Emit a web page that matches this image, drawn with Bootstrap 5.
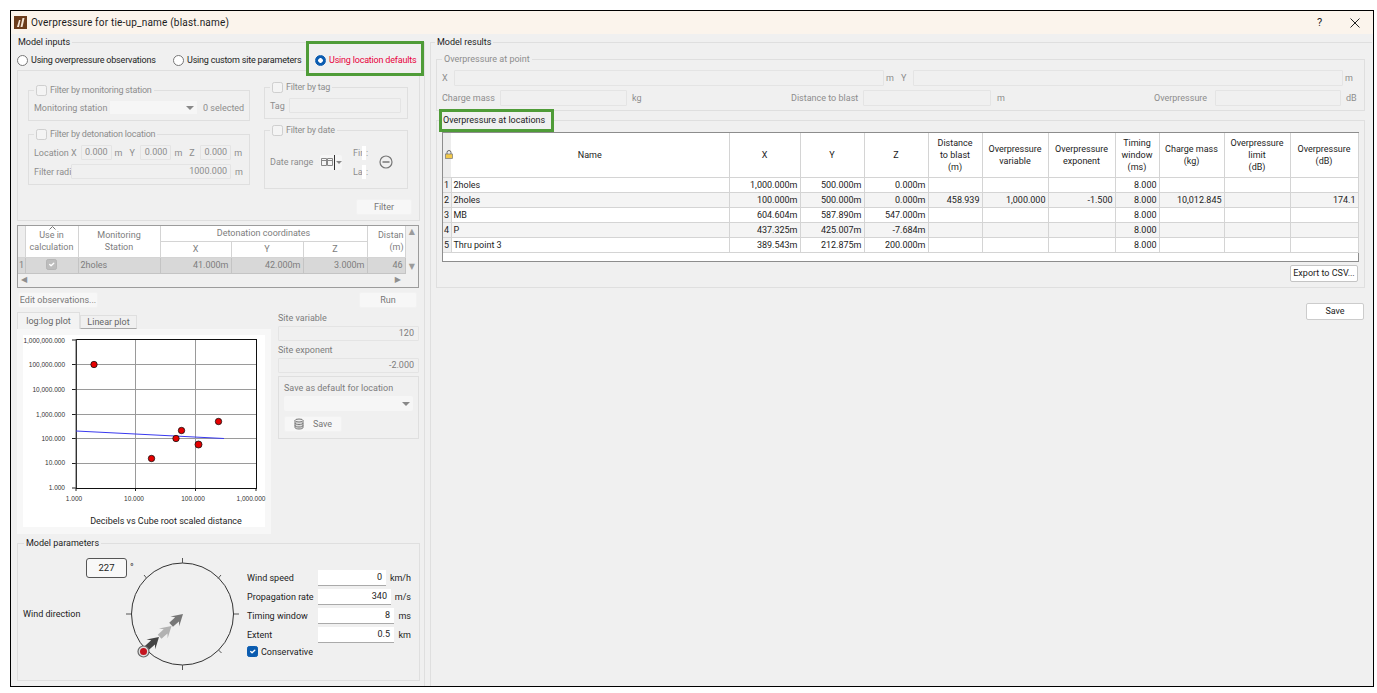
<!DOCTYPE html>
<html lang="en">
<head>
<meta charset="utf-8">
<title>Overpressure for tie-up_name (blast.name)</title>
<link rel="stylesheet" href="https://cdn.jsdelivr.net/npm/bootstrap@5.3.0/dist/css/bootstrap.min.css">
<style>
html, body { background: #fff; overflow: hidden; }
body { font-family: Roboto, "Noto Sans", sans-serif; font-size: 9px; line-height: 12px; color: #1c1c1c; white-space: nowrap; }
.win { margin: 10px 0 0 10px; width: 1364px; height: 677px; border: 1px solid #000; background: #f0f0f0; overflow: hidden; }
.tbar { height: 23px; background: #fbf4ec; font-size: 10px; padding-left: 3px; }
.tbar-title { margin-left: 4px; letter-spacing: .2px; }
.tbar-help { width: 33px; font-size: 11px; }
.tbar-close { width: 23px; }
.main { height: 652px; padding-top: 2px; }
fieldset.grp { border: 1px solid #dfdfdf; min-width: 0; margin: 0; padding: 0; }
fieldset.grp > legend { float: none; width: auto; font-size: 9px; line-height: 12px; margin: 0 0 0 6px; padding: 0 2px; }
.off, .off fieldset.grp > legend { color: #8d8d8d; }
fieldset.grp.pane-left { width: 408px; margin-left: 6px; height: 650px; border-width: 1px 1px 0 0; flex: none; }
fieldset.grp.pane-left > legend { margin-left: 0; padding-left: 1px; }
fieldset.grp.pane-right { width: 942px; margin-left: 5px; height: 650px; border-width: 1px 0 0 1px; flex: none; }
fieldset.grp.pane-right > legend { margin-left: 4px; }
.radio-row { height: 22px; width: 407px; padding-top: 2px; }
.radio-opt { flex: none; }
.radio-opt label { margin-left: 3px; letter-spacing: -.2px; }
.opt-a { width: 156px; }
.opt-b { width: 142px; }
.opt-c { width: 108px; color: #e8003c; z-index: 1; }
.hl { position: absolute; border: 3px solid #4f9c38; background: #f0f0f0; z-index: -1; }
.hl-radio { left: -9px; right: -1px; top: -13px; bottom: -10px; }
.leg-hot { z-index: 1; }
fieldset.grp > legend.leg-hot { margin-left: 4px; }
.hl-legend { left: -2px; right: -7px; top: -5px; bottom: -6px; }
.chk, .rad { width: 11px; height: 11px; margin: 0 !important; flex: none; border-color: #777; background-color: #fff; }
.chk:checked { background-color: #0b5cb0; border-color: #0b5cb0; }
.chk:disabled { opacity: 1; border-color: #cfcfcf; background-color: #f4f4f4; }
.chk:disabled:checked { background-color: #bdbdbd; border-color: #b5b5b5; }
.rad:checked { background-color: #fff; border-color: #0b5cb0; border-width: 1px; --bs-form-check-bg-image: none; background-image: radial-gradient(circle, #fff 0 2px, #0b5cb0 2.6px); }
.filters { width: 403px; height: 151px; border: 1px solid #dfdfdf; padding: 13px 10px 0 10px; }
.fil-left { width: 222px; }
.fil-right { width: 144px; margin-left: 14px; margin-top: -3px; }
fieldset.grp > legend.leg-chk { display: flex; align-items: center; gap: 3px; margin-left: 5px; letter-spacing: -.2px; }
fieldset.grp.gb-mon { height: 37px; }
fieldset.grp.gb-det { height: 57px; margin-top: 7px; }
fieldset.grp.gb-tag { height: 38px; }
fieldset.grp.gb-date { height: 65px; margin-top: 5px; }
.frow { height: 19px; padding-left: 5px; }
.gb-mon .frow { margin-top: 2px; }
.gb-det .frow:first-of-type { margin-top: 3px; }
.ctl { height: 15px; background: #f0f0f0; border: 1px solid #e4e4e4; text-align: right; padding: 0 3px; line-height: 13px; border-radius: 1px; flex: none; }
.ctl-white { background: #f6f6f6; border-color: #f0f0f0; }
.caret { width: 0; height: 0; border-left: 4px solid transparent; border-right: 4px solid transparent; border-top: 4px solid #888; }
.combo-mon { width: 89px; margin: 0 5px 0 0; }
.lab-mon { width: 75px; }
.lab-loc { width: 47px; }
.num-w { width: 31px; }
.u-a { width: 18px; padding-left: 3px; }
.u-b { width: 11px; }
.lab-rad { width: 37px; }
.num-rad { width: 160px; margin-right: 1px; }
.gb-tag .frow { margin-top: 3px; }
.lab-tag { width: 19px; }
.tag-in { width: 112px; }
.date-row { padding: 7px 0 0 5px; }
.lab-date { width: 50px; }
.date-pick { width: 22px; height: 15px; background: #f6f6f6; border-radius: 2px; padding-left: 1px; }
.date-pick i { display: block; width: 1px; height: 15px; background: #333; margin: 0 1px; }
.date-pick b { display: block; width: 0; height: 0; border-left: 3px solid transparent; border-right: 3px solid transparent; border-top: 3px solid #888; }
.fl-col { margin-left: 11px; width: 20px; }
.fl-col > div { height: 19px; }
.fl-col s { text-decoration: none; display: block; width: 4px; height: 14px; background: #fff; margin-left: -1px; }
.fl-cut { width: 10px; }
.minus-ic { margin-left: 6px; }
.btn-flat { height: 16px; background: #fff; border: 1px solid #dcdcdc; border-radius: 2px; font-size: 9px; line-height: 13px; padding: 0; color: #1c1c1c; white-space: nowrap; }
.btn-dim { background: #f7f7f7; border-color: #f2f2f2; color: #777; }
.btn-filter { width: 56px; margin: 10px -3px 0 0; }
.obs-wrap { width: 402px; height: 63px; margin-top: 4px; border: 1px solid #9c9c9c; background: #f0f0f0; }
.obs-top { height: 47px; }
.obs-tbl.table { table-layout: fixed; width: 387px; margin: 0; color: #7d7d7d; border-color: #d4d4d4; --bs-table-bg: #fff; }
.obs-tbl.table > :not(caption) > * > * { padding: 0 1px; font-size: 9px; line-height: 12px; border-width: 0 1px 1px 0; border-color: #d4d4d4; white-space: nowrap; overflow: hidden; text-align: center; vertical-align: middle; font-weight: 400; box-shadow: none; }
.obs-h1 { height: 15px; }
.obs-h2 { height: 16px; }
.obs-tbl.table > tbody > tr > * { background: #d8d8d8; height: 16px; border-color: #c4c4c4; }
.obs-tbl.table > tbody > tr > .t-l { text-align: left; padding-left: 2px; }
.obs-tbl.table > tbody > tr > .t-r { text-align: right; padding-right: 2px; }
.obs-tbl.table > thead > tr > .c-num { background: #eee; }
.obs-tbl.table > thead > tr > .t-end { text-align: right; }
.sort-up { position: absolute; top: 0; left: 23px; }
.vscroll { width: 14px; height: 47px; color: #9b9b9b; font-size: 8px; }
.hscroll { height: 14px; color: #8f8f8f; font-size: 8px; padding: 0 17px 0 3px; }
.glyph { font-family: "DejaVu Sans", sans-serif; }
.obs-btns { width: 401px; margin-top: 4px; padding: 0 1px; }
.btn-edit { width: 80px; }
.btn-run { width: 58px; }
.plot-sec { margin-top: 4px; height: 222px; width: 403px; }
.plot-col { width: 254px; }
.plot-tabs { height: 17px; }
.ptab { height: 17px; padding: 2px 0 0; text-align: center; color: #666; border: 1px solid #dfdfdf; border-bottom: 0; background: #f3f3f3; width: 63px; }
.ptab-b { width: 57px; height: 14px; padding-top: 0; margin-top: 3px; border-bottom: 1px solid #aaa; background: #f0f0f0; }
.plot-box { height: 205px; background: #f7f7f7; padding: 6px; }
.plot-svg { display: block; background: #fff; overflow: visible; }
.plot-svg text { font-family: "Liberation Sans", sans-serif; font-size: 6.5px; fill: #333; }
.plot-svg text.cap { font-family: Roboto, sans-serif; font-size: 9px; fill: #1c1c1c; }
.site-col { width: 141px; margin-left: 7px; color: #7d7d7d; }
.site-lab { height: 12px; margin-bottom: 2px; }
.site-in { height: 15px; width: 141px; padding-right: 4px; }
.site-2 { margin-top: 3px; }
.save-def { margin-top: 3px; height: 63px; width: 141px; border: 1px solid #dfdfdf; padding: 5px 5px 0; }
.save-combo { width: 129px; height: 15px; background: #f6f6f6; margin-top: 2px; padding-right: 3px; border-radius: 2px; }
.btn-save-dim { width: 58px; height: 16px; margin-top: 5px; }
fieldset.grp.params { width: 403px; height: 144px; margin-top: 3px; }
.params .cap-a { width: 109px; padding-left: 5px; }
.deg-box { width: 41px; height: 20px; margin: 9px 0 0 63px; background: #f8f8f8; border: 1px solid #555; border-radius: 3px; font-size: 9.5px; line-height: 18px; text-align: center; }
.wind-lab { margin-top: 30px; }
.dial { display: block; overflow: visible; margin-top: 4px; }
.dial text { font-family: Roboto, sans-serif; font-size: 10px; fill: #333; }
.pform { width: 164px; margin: 19px 0 0 7px; }
.prow { height: 19px; }
.plab { width: 71px; }
.pin { height: 16px; background: #fff; border-bottom: 1.5px solid #aaa; text-align: right; padding: 0 4px; line-height: 15px; }
.pin-a { width: 68px; }
.pin-b { width: 73px; }
.pin-c { width: 76px; }
.prow-chk { height: 15px; gap: 3px; }
fieldset.grp.gb-point { width: 929px; height: 58px; margin: 5px 0 0 5px; }
fieldset.grp.gb-point > legend { margin-left: 5px; }
.gb-point .r1 { height: 20px; padding-left: 5px; margin-top: 3px; }
.gb-point .r2 { height: 20px; padding-left: 5px; }
.pt-x { width: 12px; }
.pt-in1 { width: 430px; height: 16px; }
.pt-m { width: 17px; padding-left: 2px; }
.pt-c { width: 58px; }
.pt-in2 { width: 127px; height: 16px; }
.pt-kg { width: 164px; padding-left: 5px; }
.pt-d { width: 72px; }
.pt-in3 { width: 128px; height: 16px; }
.pt-mm { width: 163px; padding-left: 6px; }
.pt-o { width: 61px; }
.pt-in4 { width: 126px; height: 16px; }
.pt-db { padding-left: 5px; }
fieldset.grp.gb-loc { width: 929px; height: 174px; margin: 3px 0 0 5px; }
.res-wrap { width: 917px; height: 130px; margin: 6px 0 0 5px; border: 1px solid #8d8d8d; background: #fff; }
.res-tbl.table { table-layout: fixed; width: 915px; margin: 0; border-color: #d4d4d4; --bs-table-bg: #fff; color: #1c1c1c; }
.res-tbl.table > :not(caption) > * > * { padding: 0 2px; font-size: 9px; line-height: 12px; border-width: 0 1px 1px 0; border-color: #d4d4d4; box-shadow: none; height: 15px; white-space: nowrap; vertical-align: middle; }
.res-tbl.table > thead > tr > * { height: 44px; text-align: center; font-weight: 400; }
.res-tbl.table > tbody > tr:nth-child(even) > * { background: #f4f4f4; }
.res-tbl.table > thead > tr > .c-num { background: #ededed; padding: 0; text-align: left; overflow: visible; border-right: 0; }
.res-tbl.table > tbody > tr > .c-num { background: #f0f0f0; padding: 0 0 0 1px; }
.res-tbl.table > tbody > tr > .num { text-align: right; }
.lock-ic { display: block; margin-left: 2px; }
.btn-csv { width: 68px; height: 17px; margin: 3px 0 0 853px; font-size: 9px; border-color: #c4c4c4; display: block; }
.btn-save { width: 58px; height: 17px; display: block; margin: 15px 0 0 875px; border-color: #ccc; }
</style>
</head>
<body>
<div class="win">
  <div class="tbar d-flex align-items-center">
    <svg width="13" height="13" viewBox="0 0 13 13">
      <rect width="13" height="13" fill="#6b3c1c"/>
      <path d="M3 11 5 4 6.500 4 5 11zM6.500 11 8.500 2 10.500 2 8.500 11z" fill="#f3e4d4"/>
    </svg>
    <span class="tbar-title flex-grow-1">Overpressure for tie-up_name (blast.name)</span>
    <span class="tbar-help">?</span>
    <span class="tbar-close">
      <svg width="10" height="10" viewBox="0 0 10 10"><path d="M.5.5 9.500 9.500M9.500.5.5 9.500" stroke="#222" stroke-width="1"/></svg>
    </span>
  </div>

  <div class="main d-flex">
    <!-- model inputs -->
    <fieldset class="grp pane-left">
      <legend>Model inputs</legend>
      <div class="radio-row d-flex align-items-center">
        <div class="radio-opt opt-a d-flex align-items-center"><input class="form-check-input rad" type="radio" name="src"><label>Using overpressure observations</label></div>
        <div class="radio-opt opt-b d-flex align-items-center"><input class="form-check-input rad" type="radio" name="src"><label>Using custom site parameters</label></div>
        <div class="radio-opt opt-c position-relative d-flex align-items-center">
          <span class="hl hl-radio"></span>
          <input class="form-check-input rad" type="radio" name="src" checked><label>Using location defaults</label>
        </div>
      </div>

      <div class="filters off">
        <div class="d-flex">
          <div class="fil-left">
            <fieldset class="grp gb-mon">
              <legend class="leg-chk"><input class="form-check-input chk" type="checkbox" disabled>Filter by monitoring station</legend>
              <div class="frow d-flex align-items-center">
                <span class="lab-mon">Monitoring station</span>
                <span class="ctl ctl-white combo-mon d-flex align-items-center justify-content-end"><span class="caret"></span></span>
                <span>0 selected</span>
              </div>
            </fieldset>
            <fieldset class="grp gb-det">
              <legend class="leg-chk"><input class="form-check-input chk" type="checkbox" disabled>Filter by detonation location</legend>
              <div class="frow d-flex align-items-center">
                <span class="lab-loc">Location X</span>
                <span class="ctl num-w">0.000</span><span class="u-a">m</span>
                <span class="u-b">Y</span>
                <span class="ctl num-w">0.000</span><span class="u-a">m</span>
                <span class="u-b">Z</span>
                <span class="ctl num-w">0.000</span><span class="u-a">m</span>
              </div>
              <div class="frow d-flex align-items-center">
                <span class="lab-rad">Filter radi</span>
                <span class="ctl num-rad">1000.000</span><span class="u-a">m</span>
              </div>
            </fieldset>
          </div>
          <div class="fil-right">
            <fieldset class="grp gb-tag">
              <legend class="leg-chk"><input class="form-check-input chk" type="checkbox" disabled>Filter by tag</legend>
              <div class="frow d-flex align-items-center">
                <span class="lab-tag">Tag</span><span class="ctl tag-in"></span>
              </div>
            </fieldset>
            <fieldset class="grp gb-date">
              <legend class="leg-chk"><input class="form-check-input chk" type="checkbox" disabled>Filter by date</legend>
              <div class="date-row d-flex align-items-center">
                <span class="lab-date">Date range</span>
                <span class="date-pick d-flex align-items-center">
                  <svg width="12" height="8" viewBox="0 0 12 8"><path d="M.5.500h5v7h-5zM6.500.500h5v7h-5zM.5 2.500h11" fill="none" stroke="#888"/></svg>
                  <i></i><b></b>
                </span>
                <span class="fl-col">
                  <div class="d-flex align-items-center"><span class="fl-cut">Fir</span><s></s>:</div>
                  <div class="d-flex align-items-center"><span class="fl-cut">La</span><s></s>:</div>
                </span>
                <svg class="minus-ic" width="14" height="14" viewBox="0 0 14 14"><circle cx="7" cy="7" r="6" fill="none" stroke="#777" stroke-width="1.200"/><path d="M3.500 7h7" stroke="#777" stroke-width="1.500"/></svg>
              </div>
            </fieldset>
          </div>
        </div>
        <div class="d-flex justify-content-end">
          <button class="btn btn-flat btn-dim btn-filter" type="button">Filter</button>
        </div>
      </div>

      <div class="obs-wrap">
        <div class="obs-top d-flex">
          <table class="table obs-tbl">
            <colgroup><col style="width:7px"><col style="width:53px"><col style="width:82px"><col style="width:71px"><col style="width:72px"><col style="width:64px"><col style="width:38px"></colgroup>
            <thead>
              <tr class="obs-h1">
                <th class="c-num" rowspan="2"></th>
                <th class="position-relative" rowspan="2">
                  <svg class="sort-up" width="7" height="4" viewBox="0 0 7 4"><path d="M.5 3.500 3.500.500l3 3" fill="none" stroke="#777"/></svg>
                  Use in<br>calculation
                </th>
                <th rowspan="2">Monitoring<br>Station</th>
                <th colspan="3">Detonation coordinates</th>
                <th class="t-end" rowspan="2">Distan<br>(m)</th>
              </tr>
              <tr class="obs-h2"><th>X</th><th>Y</th><th>Z</th></tr>
            </thead>
            <tbody>
              <tr>
                <td>1</td>
                <td><input class="form-check-input chk" type="checkbox" disabled checked></td>
                <td class="t-l">2holes</td>
                <td class="t-r">41.000m</td>
                <td class="t-r">42.000m</td>
                <td class="t-r">3.000m</td>
                <td class="t-r">46</td>
              </tr>
            </tbody>
          </table>
          <div class="vscroll glyph d-flex flex-column justify-content-between align-items-center"><span>▲</span><span>▼</span></div>
        </div>
        <div class="hscroll glyph d-flex justify-content-between align-items-center"><span>◀</span><span>▶</span></div>
      </div>

      <div class="obs-btns d-flex justify-content-between">
        <button class="btn btn-flat btn-dim btn-edit" type="button">Edit observations...</button>
        <button class="btn btn-flat btn-dim btn-run" type="button">Run</button>
      </div>

      <div class="plot-sec d-flex">
        <div class="plot-col">
          <div class="plot-tabs d-flex">
            <div class="ptab">log:log plot</div>
            <div class="ptab ptab-b">Linear plot</div>
          </div>
          <div class="plot-box">
            <svg class="plot-svg" width="242" height="192" viewBox="23 334 242 192">
              <g stroke="#9a9a9a">
                <path d="M135.500 338v149M195.500 338v149M76 363.500h180M76 388.500h180M76 413.500h180M76 437.500h180M76 462.500h180"/>
              </g>
              <path d="M72 339h4M72 363.500h4M72 388.500h4M72 413.500h4M72 437.500h4M72 462.500h4M72 487h4M76 487v3M135.500 487v3M195.500 487v3M256 487v3" stroke="#222"/>
              <rect x="76.500" y="338.500" width="180" height="149" fill="none" stroke="#111"/>
              <path d="M76 338v149" stroke="#555" stroke-width="1"/>
              <path d="M76 430 224 437.500" stroke="#3a3af0" stroke-width="1"/>
              <g fill="#e60000" stroke="#111" stroke-width=".8">
                <circle cx="94" cy="363.500" r="3.200"/>
                <circle cx="151.500" cy="457.500" r="3.200"/>
                <circle cx="176" cy="437.500" r="3.200"/>
                <circle cx="181.500" cy="429.500" r="3.200"/>
                <circle cx="198.500" cy="443.500" r="3.500"/>
                <circle cx="218.500" cy="420.500" r="3.200"/>
              </g>
              <g text-anchor="end">
                <text x="65" y="342">1,000,000.000</text>
                <text x="65" y="366">100,000.000</text>
                <text x="65" y="391">10,000.000</text>
                <text x="65" y="416">1,000.000</text>
                <text x="65" y="440">100.000</text>
                <text x="65" y="464">10.000</text>
                <text x="65" y="489">1.000</text>
              </g>
              <g text-anchor="middle">
                <text x="74" y="499.500">1.000</text>
                <text x="134" y="499.500">10.000</text>
                <text x="193" y="499.500">100.000</text>
                <text x="251" y="499.500">1,000.000</text>
                <text class="cap" x="166" y="523">Decibels vs Cube root scaled distance</text>
              </g>
            </svg>
          </div>
        </div>
        <div class="site-col">
          <div class="site-lab">Site variable</div>
          <div class="ctl site-in">120</div>
          <div class="site-lab site-2">Site exponent</div>
          <div class="ctl site-in">-2.000</div>
          <div class="save-def">
            <div>Save as default for location</div>
            <div class="save-combo d-flex align-items-center justify-content-end"><span class="caret"></span></div>
            <button class="btn btn-flat btn-dim btn-save-dim d-flex align-items-center justify-content-center gap-2" type="button">
              <svg width="11" height="12" viewBox="0 0 11 12"><path d="M1 2.500v7C1 10.500 3 11 5 11s4-.5 4-1.500v-7" fill="#ddd" stroke="#777"/><ellipse cx="5" cy="2.500" rx="4" ry="1.500" fill="#eee" stroke="#777"/><path d="M1 5c0 1 2 1.500 4 1.500S9 6 9 5M1 7.500c0 1 2 1.500 4 1.500s4-.5 4-1.500" fill="none" stroke="#777"/></svg>
              Save
            </button>
          </div>
        </div>
      </div>

      <fieldset class="grp params">
        <legend>Model parameters</legend>
        <div class="d-flex">
          <div class="cap-a d-flex flex-column">
            <div class="deg-box">227</div>
            <div class="wind-lab">Wind direction</div>
          </div>
          <svg class="dial" width="113" height="124" viewBox="127 553 113 124">
            <text x="130" y="571">°</text>
            <circle cx="182.500" cy="614" r="51" fill="none" stroke="#333" stroke-width="1"/>
            <path d="M182.500 558v5M182.500 665v5M126 614h5M234 614h5M144 575l2.500 3M221 575l-3 3.500M221.500 653l-3-3" stroke="#555"/>
            <g fill="#444" transform="translate(159 637) rotate(-42)"><polygon points="0,0 -11,-6.500 -8,-2.800 -19,-2.800 -19,2.800 -8,2.800 -11,6.500"/></g>
            <g fill="#b2b2b2" transform="translate(171.500 626) rotate(-42)"><polygon points="0,0 -11,-6.500 -8,-2.800 -16,-2.800 -16,2.800 -8,2.800 -11,6.500"/></g>
            <g fill="#777" transform="translate(183 614) rotate(-42)"><polygon points="0,0 -11,-6.500 -8,-2.800 -16,-2.800 -16,2.800 -8,2.800 -11,6.500"/></g>
            <circle cx="143.500" cy="651.500" r="5.500" fill="#ddd" stroke="#666" stroke-width="1.200"/>
            <circle cx="143.500" cy="651.500" r="3.500" fill="#c4141f"/>
          </svg>
          <div class="pform">
            <div class="prow d-flex align-items-center"><span class="plab">Wind speed</span><span class="pin pin-a">0</span><span class="ms-auto">km/h</span></div>
            <div class="prow d-flex align-items-center"><span class="plab">Propagation rate</span><span class="pin pin-b">340</span><span class="ms-auto">m/s</span></div>
            <div class="prow d-flex align-items-center"><span class="plab">Timing window</span><span class="pin pin-c">8</span><span class="ms-auto">ms</span></div>
            <div class="prow d-flex align-items-center"><span class="plab">Extent</span><span class="pin pin-c">0.5</span><span class="ms-auto">km</span></div>
            <div class="prow-chk d-flex align-items-center"><input class="form-check-input chk" type="checkbox" checked>Conservative</div>
          </div>
        </div>
      </fieldset>
    </fieldset>

    <!-- model results -->
    <fieldset class="grp pane-right">
      <legend>Model results</legend>
      <fieldset class="grp gb-point off">
        <legend>Overpressure at point</legend>
        <div class="r1 d-flex align-items-center">
          <span class="pt-x">X</span><span class="ctl pt-in1"></span><span class="pt-m">m</span>
          <span class="pt-x">Y</span><span class="ctl pt-in1"></span><span class="pt-m">m</span>
        </div>
        <div class="r2 d-flex align-items-center">
          <span class="pt-c">Charge mass</span><span class="ctl pt-in2"></span><span class="pt-kg">kg</span>
          <span class="pt-d">Distance to blast</span><span class="ctl pt-in3"></span><span class="pt-mm">m</span>
          <span class="pt-o">Overpressure</span><span class="ctl pt-in4"></span><span class="pt-db">dB</span>
        </div>
      </fieldset>

      <fieldset class="grp gb-loc">
        <legend class="leg-hot position-relative"><span class="hl hl-legend"></span>Overpressure at locations</legend>
        <div class="res-wrap">
          <table class="table res-tbl">
            <colgroup><col style="width:8px"><col style="width:278px"><col style="width:71px"><col style="width:64px"><col style="width:64px"><col style="width:54px"><col style="width:66px"><col style="width:67px"><col style="width:44px"><col style="width:65px"><col style="width:66px"><col style="width:68px"></colgroup>
            <thead>
              <tr>
                <th class="c-num"><svg class="lock-ic" width="8" height="9" viewBox="0 0 8 9"><path d="M2 4V2.500a2 2 0 0 1 4 0V4" fill="none" stroke="#666"/><rect x=".5" y="4" width="7" height="4.500" fill="#f3c94a" stroke="#777" stroke-width=".7"/></svg></th>
                <th>Name</th><th>X</th><th>Y</th><th>Z</th>
                <th>Distance<br>to blast<br>(m)</th>
                <th>Overpressure<br>variable</th>
                <th>Overpressure<br>exponent</th>
                <th>Timing<br>window<br>(ms)</th>
                <th>Charge mass<br>(kg)</th>
                <th>Overpressure<br>limit<br>(dB)</th>
                <th>Overpressure<br>(dB)</th>
              </tr>
            </thead>
            <tbody>
              <tr><td class="c-num">1</td><td>2holes</td><td class="num">1,000.000m</td><td class="num">500.000m</td><td class="num">0.000m</td><td></td><td></td><td></td><td class="num">8.000</td><td></td><td></td><td></td></tr>
              <tr><td class="c-num">2</td><td>2holes</td><td class="num">100.000m</td><td class="num">500.000m</td><td class="num">0.000m</td><td class="num">458.939</td><td class="num">1,000.000</td><td class="num">-1.500</td><td class="num">8.000</td><td class="num">10,012.845</td><td></td><td class="num">174.1</td></tr>
              <tr><td class="c-num">3</td><td>MB</td><td class="num">604.604m</td><td class="num">587.890m</td><td class="num">547.000m</td><td></td><td></td><td></td><td class="num">8.000</td><td></td><td></td><td></td></tr>
              <tr><td class="c-num">4</td><td>P</td><td class="num">437.325m</td><td class="num">425.007m</td><td class="num">-7.684m</td><td></td><td></td><td></td><td class="num">8.000</td><td></td><td></td><td></td></tr>
              <tr><td class="c-num">5</td><td>Thru point 3</td><td class="num">389.543m</td><td class="num">212.875m</td><td class="num">200.000m</td><td></td><td></td><td></td><td class="num">8.000</td><td></td><td></td><td></td></tr>
            </tbody>
          </table>
        </div>
        <button class="btn btn-flat btn-csv" type="button">Export to CSV...</button>
      </fieldset>
      <button class="btn btn-flat btn-save" type="button">Save</button>
    </fieldset>
  </div>
</div>
<script src="https://cdn.jsdelivr.net/npm/bootstrap@5.3.0/dist/js/bootstrap.bundle.min.js"></script>
</body>
</html>
